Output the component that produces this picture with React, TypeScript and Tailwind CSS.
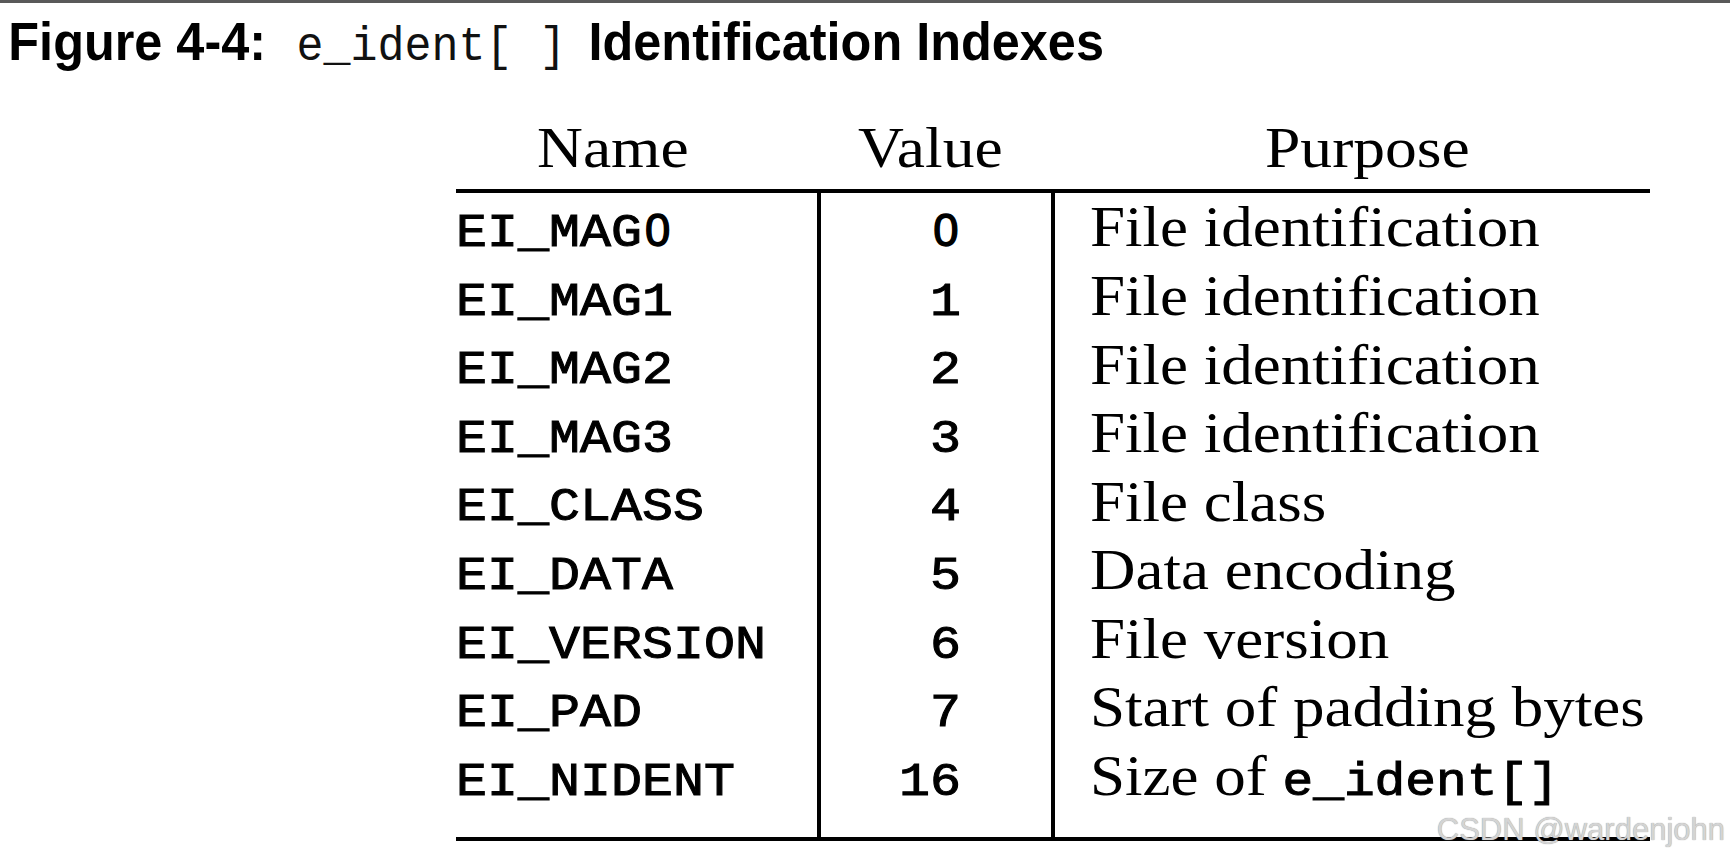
import React from "react";

const rows: [string, string, string][] = [
  ["EI_MAG0", "0", "File identification"],
  ["EI_MAG1", "1", "File identification"],
  ["EI_MAG2", "2", "File identification"],
  ["EI_MAG3", "3", "File identification"],
  ["EI_CLASS", "4", "File class"],
  ["EI_DATA", "5", "Data encoding"],
  ["EI_VERSION", "6", "File version"],
  ["EI_PAD", "7", "Start of padding bytes"],
  ["EI_NIDENT", "16", ""],
];

function Mono({ text }: { text: string }) {
  return (
    <>
      {text.split("").map((ch, i) =>
        ch === "0" ? (
          <span
            key={i}
            className="inline-block w-[0.6em] scale-x-[0.88] text-center font-['Liberation_Sans',Arial,sans-serif] leading-none [-webkit-text-stroke:1.4px_black]"
          >
            0
          </span>
        ) : (
          <React.Fragment key={i}>{ch}</React.Fragment>
        )
      )}
    </>
  );
}

export default function App() {
  return (
    <div className="relative h-[860px] w-full overflow-hidden bg-white text-black">
      <div className="h-[3px] w-full bg-[#595959]" />
      <div className="mt-[3.8px] h-[70px] origin-left scale-x-[0.925] whitespace-nowrap pl-[9px] font-['Liberation_Sans',Arial,sans-serif] text-[54.5px] font-bold leading-[70px]">
        <span>Figure 4-4:</span>
        <span className="ml-[33px] font-['Liberation_Mono',monospace] text-[48.6px] font-normal text-[#111]">
          e_ident[ ]
        </span>
        <span className="ml-[24px]">Identification Indexes</span>
      </div>

      <div className="ml-[456px] w-[1194px]">
        <div className="flex h-[112.2px] whitespace-nowrap pt-[40.3px] font-['Liberation_Serif','Times_New_Roman',serif] text-[56px] leading-[62px]">
          <div className="w-[361px] pl-[81px]">
            <span className="inline-block origin-left scale-x-[1.135]">Name</span>
          </div>
          <div className="w-[234px] pl-[41px]">
            <span className="inline-block origin-left scale-x-[1.135]">Value</span>
          </div>
          <div className="flex-1 pl-[214px]">
            <span className="inline-block origin-left scale-x-[1.135]">Purpose</span>
          </div>
        </div>

        <div className="flex h-[652px] border-y-4 border-black whitespace-nowrap">
          <div className="w-[361px] pt-[7.3px] font-['Liberation_Mono','Courier_New',monospace] text-[45.5px] font-normal leading-[68.55px] [-webkit-text-stroke:1px_black]">
            <div className="origin-left scale-x-[1.135]">
              {rows.map((r) => (
                <div key={r[0]}>
                  <Mono text={r[0]} />
                </div>
              ))}
            </div>
          </div>
          <div className="w-[234px] border-l-4 border-black pr-[90px] pt-[7.3px] font-['Liberation_Mono','Courier_New',monospace] text-[45.5px] font-normal leading-[68.55px] [-webkit-text-stroke:1px_black]">
            <div className="origin-right scale-x-[1.135] text-right">
              {rows.map((r) => (
                <div key={r[0]}>
                  <Mono text={r[1]} />
                </div>
              ))}
            </div>
          </div>
          <div className="flex-1 border-l-4 border-black pl-[35px] pt-[0.5px] font-['Liberation_Serif','Times_New_Roman',serif] text-[56px] leading-[68.55px]">
            <div className="origin-left scale-x-[1.125]">
              {rows.slice(0, 8).map((r) => (
                <div key={r[0]}>{r[2]}</div>
              ))}
              <div>
                Size of{" "}
                <span className="font-['Liberation_Mono','Courier_New',monospace] text-[45.5px] font-normal leading-none [-webkit-text-stroke:1px_black]">
                  e_ident[]
                </span>
              </div>
            </div>
          </div>
        </div>
      </div>

      <div className="absolute right-[5px] top-[814px] whitespace-nowrap font-['Liberation_Sans',Arial,sans-serif] text-[31px] leading-none text-[#d4d4d4] [text-shadow:0_0_1px_#8a8a8a]">
        CSDN @wardenjohn
      </div>
    </div>
  );
}
